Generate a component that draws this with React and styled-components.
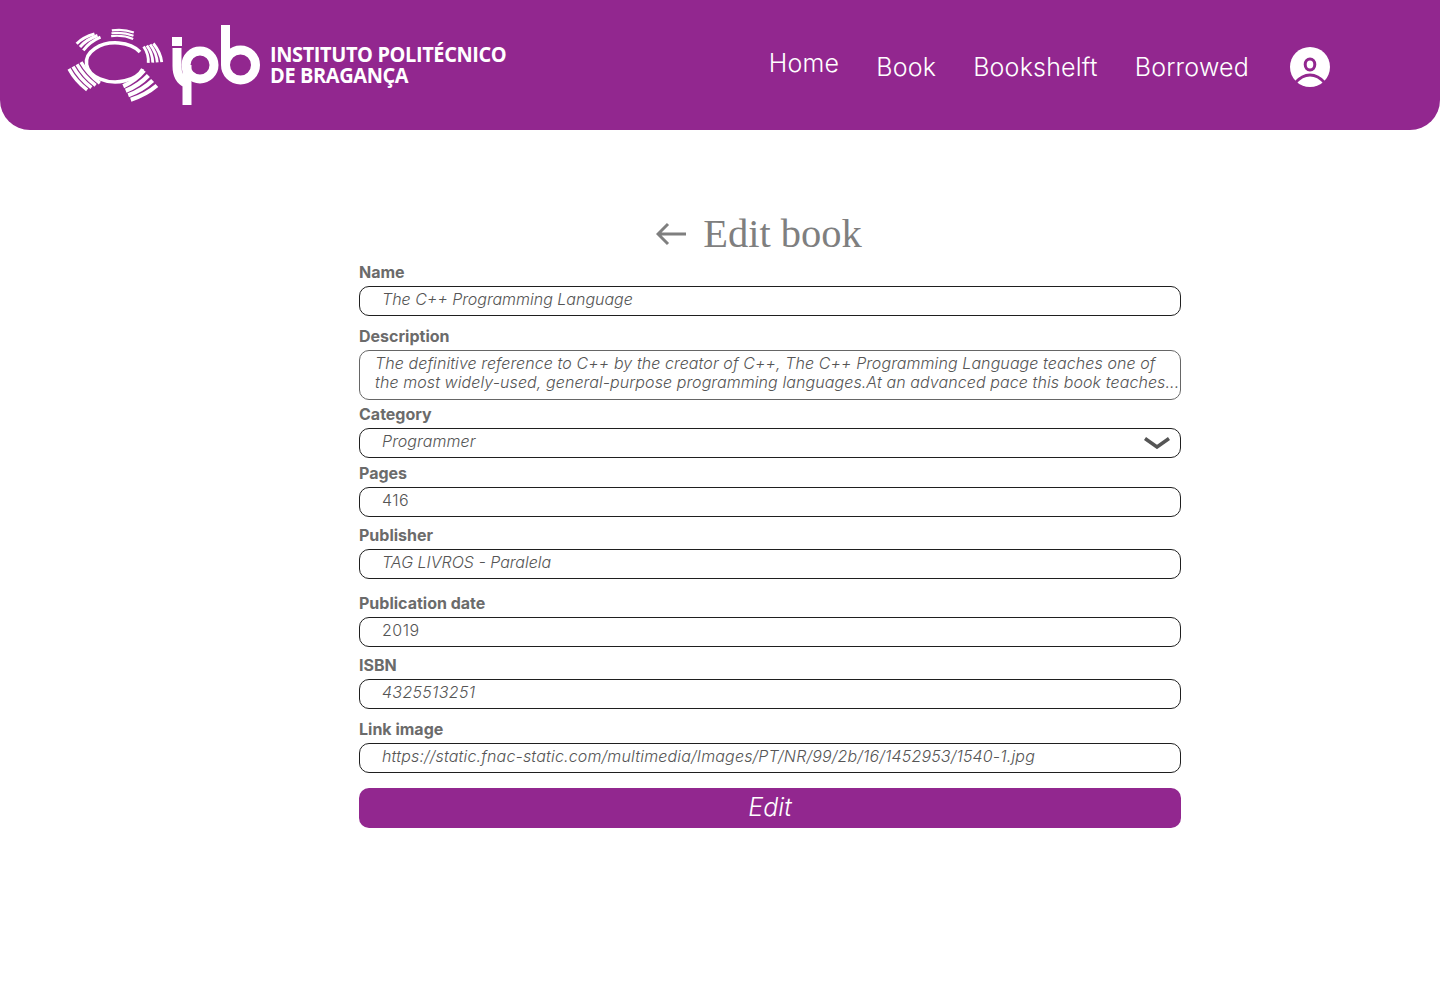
import React from "react";
import styled, { createGlobalStyle } from "styled-components";

const GlobalStyle = createGlobalStyle`
  * {
    box-sizing: border-box;
  }
  body {
    margin: 0;
    background: #fff;
    font-family: "Inter", "Liberation Sans", sans-serif;
  }
`;

const Header = styled.header`
  height: 130px;
  background-color: #92278f;
  border-radius: 0 0 30px 30px;
  display: flex;
  align-items: center;
  padding: 0 110px 0 67px;
`;
const Logo = styled.div`
  display: flex;
  align-items: center;
  margin-right: auto;
`;
const LogoLettersWrap = styled.div`
  display: flex;
  margin: 0 10px 0 5px;
`;
const LogoText = styled.div`
  margin-top: -1px;
  color: #fff;
  font-family: "Open Sans", sans-serif;
  font-weight: 700;
  font-size: 21px;
  line-height: 21px;
  letter-spacing: -0.4px;
  transform: scaleX(0.95);
  transform-origin: left center;
  white-space: nowrap;
`;
const Nav = styled.nav`
  display: flex;
  align-items: center;
  gap: 37px;
  padding-top: 4px;
`;
const NavLink = styled.a`
  color: #fff;
  font-size: 25px;
  font-weight: 300;
  line-height: 30px;
  letter-spacing: 0.2px;
  margin-bottom: ${(p) => (p.$raised ? "8px" : "0")};
`;
const Avatar = styled.svg`
  width: 40px;
  height: 40px;
  margin-left: 4px;
`;

const Main = styled.main`
  width: 822px;
  margin-left: 359px;
  padding-top: 80px;
`;
const TitleRow = styled.div`
  height: 52px;
  display: flex;
  align-items: center;
  justify-content: center;
  padding: 0 22px 4px 0;
  gap: 17px;
`;
const Title = styled.h1`
  margin: 0;
  color: #7f7f7f;
  font-family: "Liberation Serif", serif;
  font-weight: 400;
  font-size: 40.500px;
  line-height: 50px;
`;
const Field = styled.div`
  margin-top: ${(p) => p.$gap || 0}px;
`;
const Label = styled.label`
  display: block;
  height: 24px;
  font-size: 16px;
  font-weight: 700;
  line-height: 20px;
  color: #6b6b6b;
`;
const Box = styled.div`
  position: relative;
  height: 30px;
  border: 1px solid #1f1f1f;
  border-radius: 10px;
  padding-left: 22px;
  font-size: 16px;
  font-style: ${(p) => (p.$plain ? "normal" : "italic")};
  font-weight: 300;
  line-height: 24px;
  letter-spacing: ${(p) => p.$track || 0}px;
  color: #555;
  white-space: nowrap;
`;
const TextBox = styled.div`
  height: 50px;
  border: 1px solid #666;
  border-radius: 10px;
  padding: 3px 0 0 15px;
  font-size: 16px;
  font-style: italic;
  font-weight: 300;
  line-height: 19px;
  letter-spacing: 0.09px;
  color: #555;
  white-space: nowrap;
  overflow: hidden;
`;
const Chevron = styled.svg`
  position: absolute;
  right: 10px;
  top: 8px;
  width: 26px;
  height: 12px;
`;
const SubmitButton = styled.button`
  display: block;
  width: 100%;
  height: 40px;
  margin-top: 15px;
  padding: 0 0 2px;
  border: none;
  border-radius: 10px;
  background-color: #92278f;
  color: #fff;
  font-family: inherit;
  font-size: 25px;
  font-style: italic;
  font-weight: 300;
`;

// each block of the logo: inner edge and outer edge, stripes run between them
const logoBlocks = [
  { inner: [[25, 32], [42, 18]], outer: [[15, 22], [33, 13]], n: 3 },
  { inner: [[51, 17.5], [73, 20.5]], outer: [[52, 9], [74, 11]], n: 3 },
  { inner: [[82, 27], [86, 43]], outer: [[95, 23], [104, 42]], n: 4 },
  { inner: [[42, 62], [23, 41]], outer: [[25, 71], [7, 50]], n: 4 },
  { inner: [[62, 64], [82, 48]], outer: [[72, 82], [99, 68]], n: 4 },
];

const lerp = (a, b, t) => [a[0] + (b[0] - a[0]) * t, a[1] + (b[1] - a[1]) * t];
const dist = (a, b) => Math.hypot(a[0] - b[0], a[1] - b[1]);

function stripePath(block, t) {
  const p0 = lerp(block.inner[0], block.outer[0], t);
  const p1 = lerp(block.inner[1], block.outer[1], t);
  const mid = lerp(p0, p1, 0.5);
  const dx = mid[0] - 55;
  const dy = mid[1] - 40;
  const len = Math.hypot(dx, dy);
  const bulge = 3;
  return `M${p0[0]} ${p0[1]}Q${mid[0] + (dx / len) * bulge} ${mid[1] + (dy / len) * bulge} ${p1[0]} ${p1[1]}`;
}

function stripeWidth(block) {
  const thick = (dist(block.inner[0], block.outer[0]) + dist(block.inner[1], block.outer[1])) / 2;
  return (thick / block.n) * 0.72;
}

function LogoMark() {
  return (
    <svg width="100" height="80" viewBox="7 5 100 80" fill="none" stroke="#fff">
      <path d="M82.700 49A29 19.500 0 1 1 80 32" strokeWidth="3.5" />
      {logoBlocks.map((block, i) =>
        Array.from({ length: block.n }, (_, k) => (
          <path key={i + "-" + k} d={stripePath(block, (k + 0.5) / block.n)} strokeWidth={stripeWidth(block)} />
        ))
      )}
    </svg>
  );
}

function LogoLetters() {
  return (
    <svg width="88" height="80" viewBox="0 0 88 80" fill="none" stroke="#fff" strokeWidth="9">
      <rect x="0" y="12" width="10" height="9" fill="#fff" stroke="none" />
      <path d="M5 23V41Q5 54 14 58" />
      <circle cx="28" cy="40" r="14" />
      <path d="M15 80V40" />
      <circle cx="68.500" cy="40" r="15" />
      <path d="M53.500 0V40" />
    </svg>
  );
}

export default function App() {
  return (
    <>
      <GlobalStyle />
      <Header>
        <Logo>
          <LogoMark />
          <LogoLettersWrap>
            <LogoLetters />
          </LogoLettersWrap>
          <LogoText>
            INSTITUTO POLITÉCNICO
            <br />
            DE BRAGANÇA
          </LogoText>
        </Logo>
        <Nav>
          <NavLink $raised>Home</NavLink>
          <NavLink>Book</NavLink>
          <NavLink>Bookshelft</NavLink>
          <NavLink>Borrowed</NavLink>
          <Avatar viewBox="0 0 40 40">
            <circle cx="20" cy="20" r="20" fill="#fff" />
            <ellipse cx="20" cy="17.500" rx="4.800" ry="5.500" fill="none" stroke="#92278f" strokeWidth="3" />
            <path d="M5 36Q12 28 20 28T35 36" fill="none" stroke="#92278f" strokeWidth="3" />
          </Avatar>
        </Nav>
      </Header>
      <Main>
        <TitleRow>
          <svg width="30" height="24" viewBox="0 0 30 24" fill="none" stroke="#7f7f7f" strokeWidth="3">
            <path d="M30 12H2M12 2L2 12L12 22" />
          </svg>
          <Title>Edit book</Title>
        </TitleRow>
        <Field>
          <Label>Name</Label>
          <Box>The C++ Programming Language</Box>
        </Field>
        <Field $gap={10}>
          <Label>Description</Label>
          <TextBox>
            The definitive reference to C++ by the creator of C++, The C++ Programming Language teaches one of
            <br />
            the most widely-used, general-purpose programming languages.At an advanced pace this book teaches...
          </TextBox>
        </Field>
        <Field $gap={4}>
          <Label>Category</Label>
          <Box $track={0.1}>
            Programmer
            <Chevron viewBox="0 0 26 12" fill="none" stroke="#555" strokeWidth="3.5">
              <path d="M1 1.500L13 10L25 1.500" />
            </Chevron>
          </Box>
        </Field>
        <Field $gap={5}>
          <Label>Pages</Label>
          <Box $plain $track={0.5}>416</Box>
        </Field>
        <Field $gap={8}>
          <Label>Publisher</Label>
          <Box>TAG LIVROS - Paralela</Box>
        </Field>
        <Field $gap={14}>
          <Label>Publication date</Label>
          <Box $plain $track={0.5}>2019</Box>
        </Field>
        <Field $gap={8}>
          <Label>ISBN</Label>
          <Box $track={0.3}>4325513251</Box>
        </Field>
        <Field $gap={10}>
          <Label>Link image</Label>
          <Box $track={0.17}>https://static.fnac-static.com/multimedia/Images/PT/NR/99/2b/16/1452953/1540-1.jpg</Box>
        </Field>
        <SubmitButton>Edit</SubmitButton>
      </Main>
    </>
  );
}
